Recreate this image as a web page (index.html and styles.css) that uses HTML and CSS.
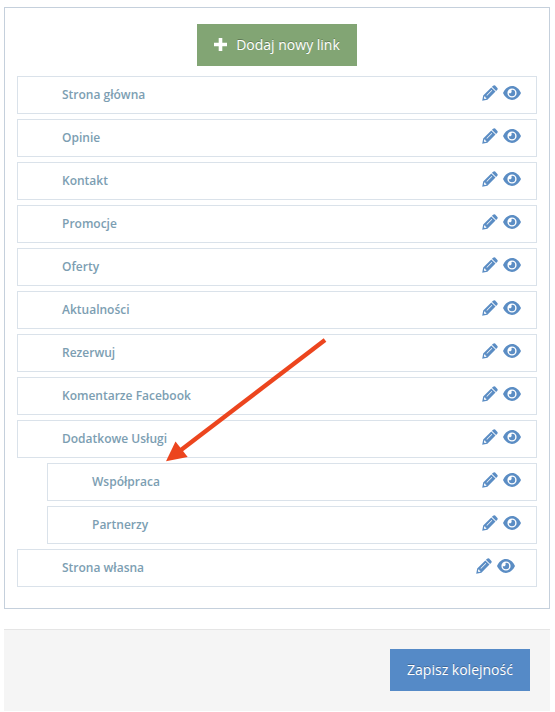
FILE: index.html
```
<!DOCTYPE html>
<html lang="pl">
<head>
    <meta charset="UTF-8">
    <meta name="viewport" content="width=device-width, initial-scale=1.0">
    <title>Menu</title>
    <link rel="stylesheet" href="styles.css">
</head>
<body>
    <svg class="sprite">
        <symbol id="pencil" viewBox="0 0 16 16">
            <path fill-rule="evenodd" d="M.2 15.8 1.200 10.500 9.300 2.400 13.500 6.600 5.400 14.700ZM2.300 11.600 1.900 13.300 2.700 14.100 4.400 13.700 4.200 12.700 3.300 12.500 3.200 11.600ZM4.500 10.300 5 10.800 10.200 5.600 9.700 5.100Z"/>
            <path d="M9.900 1.800 11.200.7Q12.200-.1 13.100.6L15.400 2.900Q16.100 3.800 15.300 4.700L14.100 6Z"/>
        </symbol>
        <symbol id="eye" viewBox="0 0 18 14">
            <path fill-rule="evenodd" d="M0 7C2 2.800 5.200.1 9 .1S16 2.800 18 7C16 11.200 12.800 13.900 9 13.900S2 11.200 0 7ZM9 2.400A4.600 4.600 0 1 0 9 11.600 4.600 4.600 0 1 0 9 2.400Z"/>
            <path d="M9 3.800A3.200 3.200 0 1 1 5.800 7Q6.600 7.600 7.700 7.200 9.300 6.500 8.400 4.600Z"/>
        </symbol>
    </svg>

    <div class="panel">
        <button class="btn btn-add">
            <svg class="plus" viewBox="0 0 13 13"><path d="M4.700 0H8.300V4.700H13V8.300H8.300V13H4.700V8.300H0V4.700H4.700Z"/></svg>
            Dodaj nowy link
        </button>
        <ol class="list">
            <li class="item">Strona główna<span class="actions"><svg class="pencil"><use href="#pencil"/></svg><svg class="eye"><use href="#eye"/></svg></span></li>
            <li class="item">Opinie<span class="actions"><svg class="pencil"><use href="#pencil"/></svg><svg class="eye"><use href="#eye"/></svg></span></li>
            <li class="item">Kontakt<span class="actions"><svg class="pencil"><use href="#pencil"/></svg><svg class="eye"><use href="#eye"/></svg></span></li>
            <li class="item">Promocje<span class="actions"><svg class="pencil"><use href="#pencil"/></svg><svg class="eye"><use href="#eye"/></svg></span></li>
            <li class="item">Oferty<span class="actions"><svg class="pencil"><use href="#pencil"/></svg><svg class="eye"><use href="#eye"/></svg></span></li>
            <li class="item">Aktualności<span class="actions"><svg class="pencil"><use href="#pencil"/></svg><svg class="eye"><use href="#eye"/></svg></span></li>
            <li class="item">Rezerwuj<span class="actions"><svg class="pencil"><use href="#pencil"/></svg><svg class="eye"><use href="#eye"/></svg></span></li>
            <li class="item">Komentarze Facebook<span class="actions"><svg class="pencil"><use href="#pencil"/></svg><svg class="eye"><use href="#eye"/></svg></span></li>
            <li class="item">Dodatkowe Usługi<span class="actions"><svg class="pencil"><use href="#pencil"/></svg><svg class="eye"><use href="#eye"/></svg></span></li>
            <li class="item child">Współpraca<span class="actions"><svg class="pencil"><use href="#pencil"/></svg><svg class="eye"><use href="#eye"/></svg></span></li>
            <li class="item child">Partnerzy<span class="actions"><svg class="pencil"><use href="#pencil"/></svg><svg class="eye"><use href="#eye"/></svg></span></li>
            <li class="item own">Strona własna<span class="actions"><svg class="pencil"><use href="#pencil"/></svg><svg class="eye"><use href="#eye"/></svg></span></li>
        </ol>
    </div>

    <div class="form-actions">
        <button class="btn btn-save">Zapisz kolejność</button>
    </div>

    <svg class="arrow" viewBox="0 0 162 124">
        <path class="shaft" d="M160 2 16 112"/>
        <path class="head" d="M1 123.200 10.500 103.500 22.700 119Z"/>
    </svg>
</body>
</html>
```

FILE: styles.css
```
* {
    box-sizing: border-box;
}
body {
    margin: 0;
    padding: 7px 5px 0 4px;
    background-color: #fff;
    font-family: "Open Sans", sans-serif;
}
.sprite {
    display: none;
}
.panel {
    display: flex;
    flex-direction: column;
    align-items: center;
    height: 602px;
    padding: 16px 12px 0;
    border: 1px solid #c5d0dc;
}
.btn {
    display: flex;
    align-items: center;
    justify-content: center;
    height: 42px;
    padding: 0 0 2px;
    border: none;
    color: #fff;
    font-family: inherit;
    font-size: 14px;
    text-shadow: 0 -1px 0 rgba(0, 0, 0, 0.25);
    cursor: pointer;
}
.btn-add {
    width: 160px;
    background-color: #82a574;
}
.btn-save {
    width: 140px;
    background-color: #558ac7;
}
.plus {
    width: 13px;
    height: 13px;
    margin-right: 9px;
    fill: #fff;
}
.list {
    width: 100%;
    margin: 10px 0 0;
    padding: 0;
    list-style: none;
}
.item {
    display: flex;
    justify-content: space-between;
    height: 38px;
    margin-bottom: 5px;
    padding: 8px 15px 0 44px;
    border: 1px solid #dae2ea;
    color: #7c9eb2;
    font-size: 12px;
    font-weight: 600;
    line-height: 20px;
}
.child {
    margin-left: 30px;
}
.own {
    padding-right: 21px;
}
.actions {
    display: flex;
    gap: 5px;
}
.pencil,
.eye {
    fill: #5b8dc4;
}
.pencil {
    width: 16px;
    height: 16px;
}
.eye {
    width: 18px;
    height: 14px;
    margin-top: 1px;
}
.form-actions {
    display: flex;
    justify-content: flex-end;
    height: 82px;
    margin-top: 20px;
    padding: 19px 20px 0;
    border-top: 1px solid #e5e5e5;
    background-color: #f5f5f5;
}
/* pointer drawn over the list */
.arrow {
    position: absolute;
    left: 165px;
    top: 338px;
    width: 162px;
    height: 124px;
    pointer-events: none;
}
.shaft {
    fill: none;
    stroke: #ec451e;
    stroke-width: 4.4;
}
.head {
    fill: #ec451e;
}
```
